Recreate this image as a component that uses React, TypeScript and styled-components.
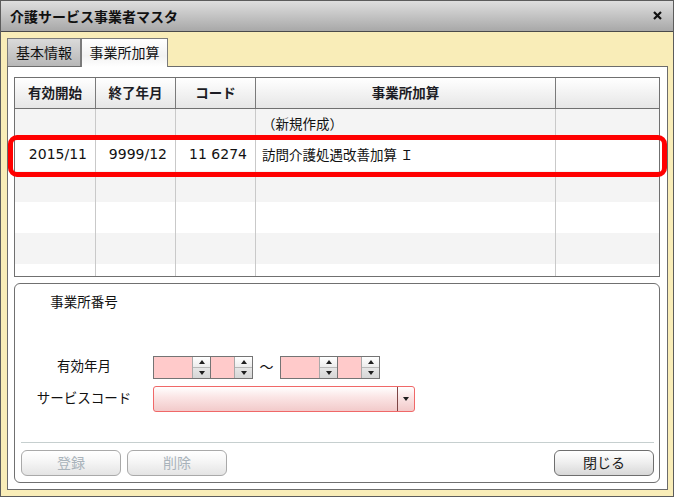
import { createGlobalStyle, styled } from "styled-components";

const GlobalStyle = createGlobalStyle`
  html, body {
    margin: 0;
    padding: 0;
  }
  body {
    font-family: "Noto Sans CJK JP", "Noto Sans", sans-serif;
    color: #1a1a1a;
  }
  * {
    box-sizing: border-box;
  }
`;

type Row = { start: string; end: string; code: string; name: string };

const rows: Row[] = [
  { start: "", end: "", code: "", name: "（新規作成）" },
  { start: "2015/11", end: "9999/12", code: "11 6274", name: "訪問介護処遇改善加算 Ｉ" },
  { start: "", end: "", code: "", name: "" },
  { start: "", end: "", code: "", name: "" },
  { start: "", end: "", code: "", name: "" },
  { start: "", end: "", code: "", name: "" },
];

const Spinner = ({ width }: { width: number }) => (
  <Spin $w={width}>
    <SpinField />
    <Stepper>
      <StepButton>
        <ArrowUp />
      </StepButton>
      <StepButton $down>
        <ArrowDown />
      </StepButton>
    </Stepper>
  </Spin>
);

const YearMonth = () => (
  <SpinGroup>
    <Spinner width={58} />
    <Spinner width={42} />
  </SpinGroup>
);

export default function App() {
  return (
    <>
      <GlobalStyle />
      <Window>
        <TitleBar>
          <span>介護サービス事業者マスタ</span>
          <svg width="9" height="9" viewBox="0 0 9 9">
            <path d="M1 1 L8 8 M8 1 L1 8" stroke="#111" strokeWidth="2.2" />
          </svg>
        </TitleBar>
        <Body>
          <Tabs>
            <Tab $w={74}>基本情報</Tab>
            <Tab $w={87} $active>
              事業所加算
            </Tab>
          </Tabs>
          <Panel>
            <Grid>
              <HeaderRow>
                <HeadCell>有効開始</HeadCell>
                <HeadCell>終了年月</HeadCell>
                <HeadCell>コード</HeadCell>
                <HeadCell>事業所加算</HeadCell>
                <HeadCell />
              </HeaderRow>
              {rows.map((r, i) => (
                <DataRow key={i} $odd={i % 2 === 0}>
                  <NumCell>{r.start}</NumCell>
                  <NumCell>{r.end}</NumCell>
                  <NumCell>{r.code}</NumCell>
                  <TextCell>{r.name}</TextCell>
                  <TextCell />
                </DataRow>
              ))}
            </Grid>
            <Highlight />
            <Form>
              <FormRow $h={18}>
                <Label>事業所番号</Label>
              </FormRow>
              <FormRow $h={23} $mt={44}>
                <Label>有効年月</Label>
                <YearMonth />
                <Tilde>～</Tilde>
                <YearMonth />
              </FormRow>
              <FormRow $h={26} $mt={7}>
                <Label>サービスコード</Label>
                <Select>
                  <SelectValue />
                  <DropButton>
                    <ArrowDown />
                  </DropButton>
                </Select>
              </FormRow>
              <Separator />
              <ButtonBar>
                <Button disabled>登録</Button>
                <Button disabled>削除</Button>
                <Spacer />
                <Button>閉じる</Button>
              </ButtonBar>
            </Form>
          </Panel>
        </Body>
      </Window>
    </>
  );
}

const Window = styled.div`
  width: 674px;
  height: 497px;
  border: 1px solid #5c5c5c;
  background: #f9edb8;
  display: flex;
  flex-direction: column;
`;

const TitleBar = styled.div`
  height: 31px;
  flex-shrink: 0;
  border-bottom: 1px solid #4a4a4a;
  background: linear-gradient(#dedede, #c6c6c6 45%, #a8a8a8);
  display: flex;
  align-items: center;
  justify-content: space-between;
  padding: 0 11px 1px 9px;
  font-size: 14px;
  font-weight: bold;
  color: #111;
`;

const Body = styled.div`
  flex: 1;
  display: flex;
  flex-direction: column;
  padding: 6px 5px 6px 6px;
`;

const Tabs = styled.div`
  display: flex;
  height: 28px;
`;

const Tab = styled.div<{ $active?: boolean; $w: number }>`
  width: ${p => p.$w}px;
  height: ${p => (p.$active ? "29px" : "28px")};
  margin-bottom: ${p => (p.$active ? "-1px" : "0")};
  position: relative;
  z-index: ${p => (p.$active ? 1 : 0)};
  border: 1px solid #7b7b7b;
  border-bottom: none;
  display: flex;
  align-items: center;
  justify-content: center;
  padding-bottom: ${p => (p.$active ? "3px" : "2px")};
  white-space: nowrap;
  font-size: 14px;
  color: #111;
  background: ${p =>
    p.$active ? "linear-gradient(#ffffff, #f2f2f2 60%, #ffffff)" : "linear-gradient(#dadada, #b7b7b7)"};
`;

const Panel = styled.div`
  flex: 1;
  position: relative;
  border: 1px solid #6c6c6c;
  background: #fff;
  padding: 10px 7px 6px 6px;
  display: flex;
  flex-direction: column;
  gap: 6px;
`;

const Grid = styled.div`
  height: 200px;
  border: 1px solid #707070;
  overflow: hidden;
  flex-shrink: 0;
`;

const HeaderRow = styled.div`
  display: grid;
  grid-template-columns: 81px 80px 80px 300px 1fr;
  height: 31px;
  border-bottom: 1px solid #707070;
  background: linear-gradient(#ffffff, #e6e6e6);
`;

const HeadCell = styled.div`
  border-right: 1px solid #7a7a7a;
  display: flex;
  align-items: center;
  justify-content: center;
  font-size: 13.5px;
  font-weight: bold;
  color: #1c1c24;
  padding-bottom: 2px;

  &:last-child {
    border-right: none;
  }
`;

const DataRow = styled.div<{ $odd: boolean }>`
  display: grid;
  grid-template-columns: 81px 80px 80px 300px 1fr;
  height: 31px;
  background: ${p => (p.$odd ? "#f4f4f4" : "#ffffff")};
`;

const NumCell = styled.div`
  border-right: 1px solid #c9c9c9;
  display: flex;
  align-items: center;
  justify-content: flex-end;
  padding: 0 8px 3px 0;
  font-family: "DejaVu Sans", "Noto Sans CJK JP", sans-serif;
  font-size: 14px;
  color: #111;
`;

const TextCell = styled.div`
  border-right: 1px solid #c9c9c9;
  display: flex;
  align-items: center;
  padding: 0 0 4px 6px;
  font-size: 13.5px;
  color: #111;

  &:last-child {
    border-right: none;
  }
`;

const Highlight = styled.div`
  position: absolute;
  left: 0;
  top: 68px;
  width: 659px;
  height: 42px;
  border: 5px solid #ff0000;
  border-radius: 9px;
  pointer-events: none;
`;

const Form = styled.div`
  height: 200px;
  flex-shrink: 0;
  border: 1px solid #707070;
  border-radius: 6px;
  padding: 10px 0 6px 0;
  display: flex;
  flex-direction: column;
`;

const FormRow = styled.div<{ $h: number; $mt?: number }>`
  display: flex;
  align-items: center;
  height: ${p => p.$h}px;
  margin-top: ${p => p.$mt ?? 0}px;
  padding-left: 5px;
`;

const Label = styled.div`
  width: 128px;
  margin-right: 5px;
  margin-bottom: 5px;
  text-align: center;
  font-size: 13.5px;
  color: #111;
  line-height: 18px;
`;

const SpinGroup = styled.div`
  display: flex;
`;

const Spin = styled.div<{ $w: number }>`
  width: ${p => p.$w}px;
  height: 23px;
  display: flex;
  border: 1px solid #747474;
  background: #ffcaca;

  & + & {
    border-left: none;
  }
`;

const SpinField = styled.div`
  flex: 1;
`;

const Stepper = styled.div`
  width: 18px;
  display: flex;
  flex-direction: column;
  border-left: 1px solid #a9a9a9;
  background: #fff;
`;

const StepButton = styled.div<{ $down?: boolean }>`
  flex: 1;
  display: flex;
  align-items: center;
  justify-content: center;
  border-top: ${p => (p.$down ? "1px solid #b8b8b8" : "none")};
  background: ${p => (p.$down ? "linear-gradient(#e6e6e6, #d6d6d6)" : "linear-gradient(#ffffff, #ececec)")};
`;

const ArrowUp = styled.span`
  width: 0;
  height: 0;
  border-left: 3.5px solid transparent;
  border-right: 3.5px solid transparent;
  border-bottom: 4px solid #1e1e1e;
`;

const ArrowDown = styled.span`
  width: 0;
  height: 0;
  border-left: 3.5px solid transparent;
  border-right: 3.5px solid transparent;
  border-top: 4px solid #1e1e1e;
`;

const Tilde = styled.div`
  width: 27px;
  text-align: center;
  font-size: 14px;
  color: #111;
  padding-bottom: 3px;
`;

const Select = styled.div`
  width: 262px;
  height: 26px;
  display: flex;
  border: 1px solid #f06868;
  border-radius: 3px;
  background: linear-gradient(#ffffff, #fbe6e6 40%, #f2caca);
`;

const SelectValue = styled.div`
  flex: 1;
`;

const DropButton = styled.div`
  width: 17px;
  border-left: 1px solid #7d4545;
  display: flex;
  align-items: center;
  justify-content: center;
`;

const Separator = styled.div`
  height: 1px;
  margin: 30px 5px 0 6px;
  background: #c6cfcf;
`;

const ButtonBar = styled.div`
  display: flex;
  gap: 6px;
  margin-top: 7px;
  padding: 0 5px 0 6px;
`;

const Spacer = styled.div`
  flex: 1;
`;

const Button = styled.button`
  width: 100px;
  height: 26px;
  border-radius: 6px;
  border: 1px solid #6e6e6e;
  background: linear-gradient(#ffffff, #f0f0f0 45%, #d8d8d8);
  font-family: "Noto Sans CJK JP", "Noto Sans", sans-serif;
  font-size: 14px;
  color: #1a1a1a;
  padding: 0 0 3px;

  &:disabled {
    border-color: #a9a9a9;
    background: linear-gradient(#ffffff, #f5f5f5 45%, #e4e4e4);
    color: #a9b3bb;
  }
`;
